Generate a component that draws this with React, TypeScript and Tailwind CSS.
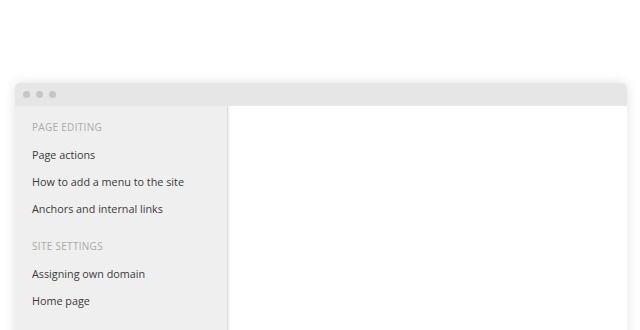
export default function App() {
  const font = { fontFamily: '"Open Sans", "Noto Sans", sans-serif' };
  return (
    <div className="w-[640px] h-[330px] bg-white overflow-hidden relative" style={font}>
      <div className="absolute left-[15px] top-[83px] w-[612px] h-[300px] rounded-t-[5px] overflow-hidden shadow-[0_0_12px_rgba(0,0,0,0.12)] flex flex-col">
        <div className="h-[23px] bg-[#e6e6e6] flex items-center gap-[6px] pl-[8px] shrink-0">
          <span className="w-[7px] h-[7px] rounded-full bg-[#c6c6c6]" />
          <span className="w-[7px] h-[7px] rounded-full bg-[#c6c6c6]" />
          <span className="w-[7px] h-[7px] rounded-full bg-[#c6c6c6]" />
        </div>
        <div className="flex flex-1">
          <div className="w-[213px] bg-[#efefef] border-r border-[#dcdcdc] pl-[17px] pt-[14px] text-[10.8px] text-[#3a3a3a]">
            <div className="h-[14px] leading-[14px] text-[10px] tracking-[0.3px] text-[#aaa]">PAGE EDITING</div>
            <div className="mt-[14px] h-[14px] leading-[14px]">Page actions</div>
            <div className="mt-[13px] h-[14px] leading-[14px]">How to add a menu to the site</div>
            <div className="mt-[13px] h-[14px] leading-[14px]">Anchors and internal links</div>
            <div className="mt-[23px] h-[14px] leading-[14px] text-[10px] tracking-[0.3px] text-[#aaa]">SITE SETTINGS</div>
            <div className="mt-[14px] h-[14px] leading-[14px]">Assigning own domain</div>
            <div className="mt-[13px] h-[14px] leading-[14px]">Home page</div>
          </div>
          <div className="flex-1 bg-white shadow-[inset_3px_0_3px_-2px_rgba(0,0,0,0.08)]" />
        </div>
      </div>
    </div>
  );
}
